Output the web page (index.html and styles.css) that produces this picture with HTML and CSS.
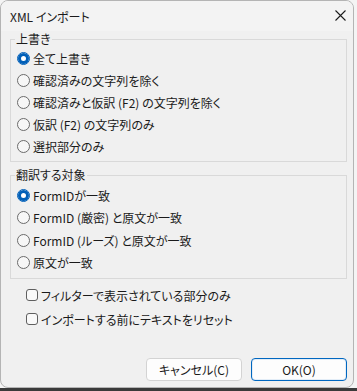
FILE: index.html
```html
<!DOCTYPE html>
<html lang="ja">
<head>
<meta charset="UTF-8">
<title>XML インポート</title>
<link rel="stylesheet" href="styles.css">
</head>
<body>
<div class="win">
    <div class="tb">
        <span class="tt">XML インポート</span>
        <svg class="cx" width="11" height="11" viewBox="0 0 11 11"><path d="M.5 .5l10 10M10.5 .5l-10 10" stroke="#1b1b1b" stroke-width="1.1" fill="none"/></svg>
    </div>

    <fieldset class="g g1">
        <legend>上書き</legend>
        <div class="r"><span class="rb on"></span>全て上書き</div>
        <div class="r"><span class="rb"></span>確認済みの文字列を除く</div>
        <div class="r"><span class="rb"></span>確認済みと仮訳 (F2) の文字列を除く</div>
        <div class="r"><span class="rb"></span>仮訳 (F2) の文字列のみ</div>
        <div class="r"><span class="rb"></span>選択部分のみ</div>
    </fieldset>

    <fieldset class="g g2">
        <legend>翻訳する対象</legend>
        <div class="r"><span class="rb on"></span>FormIDが一致</div>
        <div class="r"><span class="rb"></span>FormID (厳密) と原文が一致</div>
        <div class="r"><span class="rb"></span>FormID (ルーズ) と原文が一致</div>
        <div class="r"><span class="rb"></span>原文が一致</div>
    </fieldset>

    <div class="cks">
        <div class="ck"><span class="cb"></span>フィルターで表示されている部分のみ</div>
        <div class="ck"><span class="cb"></span>インポートする前にテキストをリセット</div>
    </div>

    <div class="ft">
        <button class="bt">キャンセル(C)</button>
        <button class="bt def">OK(O)</button>
    </div>
</div>
</body>
</html>
```

FILE: styles.css
```css
*{margin:0;padding:0;box-sizing:border-box}
body{background:linear-gradient(180deg,#f4f4f4 388px,#3a3a3a 388px);width:357px;height:391px;overflow:hidden;font-family:"Noto Sans CJK JP","Noto Sans",sans-serif;font-size:12px;color:#1a1a1a;font-feature-settings:"palt"}

/* window */
.win{width:354px;height:388px;background:#f0f0f0;border:1px solid #b4b4b4;border-radius:8px;display:flex;flex-direction:column;overflow:hidden}
.tb{height:30px;flex:none;display:flex;align-items:center;justify-content:space-between;padding:0 7px 0 9px;background:#f3f3f3}
.tt{font-size:12px;line-height:16px;padding-top:1px}
.cx{display:block;margin-top:-1px}

/* group boxes */
.g{border:1px solid #d9d9d9;margin:0 6px 0 9px;padding:0 0 4px 4px;min-width:0}
.g legend{padding:0 1px;line-height:16px;font-size:12px}
.g2{margin-top:5px;padding-top:1px}
.r{display:flex;align-items:center;height:22px;padding-left:2px;white-space:nowrap}
.g2 .r{height:22.5px}
.rb{width:13px;height:13px;flex:none;border-radius:50%;border:1px solid #6b6b6b;background:#f7f7f7;margin-right:3px}
.rb.on{border-color:#005fb8;background:#fff;box-shadow:inset 0 0 0 3px #005fb8}

/* checkboxes */
.cks{margin:4px 0 0 25px}
.ck{display:flex;align-items:center;height:24px;white-space:nowrap}
.cb{width:12px;height:12px;flex:none;border:1px solid #5f5f5f;border-radius:3px;background:#f9f9f9;margin-right:3px}

/* buttons */
.ft{margin-top:auto;display:flex;justify-content:flex-end;gap:9px;padding:0 6px 6px 0}
.bt{width:96px;height:23px;font:inherit;font-size:12px;color:#1a1a1a;background:#fdfdfd;border:1px solid #d3d3d3;border-radius:4px}
.bt.def{border-color:#0067c0;box-shadow:inset 0 0 0 1px #e3edf7}
```
